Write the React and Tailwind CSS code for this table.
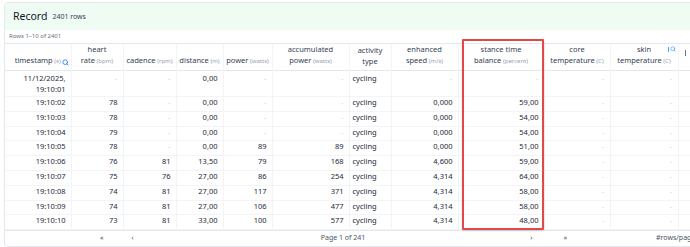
import { Search } from "lucide-react";

const columns = [
  { name: "timestamp", unit: "s", width: 66 },
  { name: "heart rate", unit: "bpm", width: 52, split: ["heart", "rate"] },
  { name: "cadence", unit: "rpm", width: 53 },
  { name: "distance", unit: "m", width: 47 },
  { name: "power", unit: "watts", width: 49 },
  { name: "accumulated power", unit: "watts", width: 77, split: ["accumulated", "power"] },
  { name: "activity type", width: 42, split: ["activity", "type"] },
  { name: "enhanced speed", unit: "m/s", width: 67, split: ["enhanced", "speed"] },
  { name: "stance time balance", unit: "percent", width: 86, split: ["stance time", "balance"] },
  { name: "core temperature", unit: "C", width: 66, split: ["core", "temperature"] },
  { name: "skin temperature", unit: "C", width: 68, split: ["skin", "temperature"] },
  { name: "", width: 60 },
];

const rows = [
  ["19:10:02", "78", "-", "0,00", "-", "-", "cycling", "0,000", "59,00"],
  ["19:10:03", "78", "-", "0,00", "-", "-", "cycling", "0,000", "54,00"],
  ["19:10:04", "79", "-", "0,00", "-", "-", "cycling", "0,000", "54,00"],
  ["19:10:05", "78", "-", "0,00", "89", "89", "cycling", "0,000", "51,00"],
  ["19:10:06", "76", "81", "13,50", "79", "168", "cycling", "4,600", "59,00"],
  ["19:10:07", "75", "76", "27,00", "86", "254", "cycling", "4,314", "64,00"],
  ["19:10:08", "74", "81", "27,00", "117", "371", "cycling", "4,314", "58,00"],
  ["19:10:09", "74", "81", "27,00", "106", "477", "cycling", "4,314", "58,00"],
  ["19:10:10", "73", "81", "33,00", "100", "577", "cycling", "4,314", "48,00"],
];

const Cell = ({ value, first }) => {
  const pad = first ? "pt-[2px]" : "";
  if (value === "-") {
    return (
      <td className={`border-r border-gray-100 pr-[5px] text-right align-top text-gray-300 ${pad}`}>
        -
      </td>
    );
  }
  if (value === "cycling") {
    return (
      <td className={`border-r border-gray-100 pl-[3px] text-left align-top text-gray-800 ${pad}`}>
        {value}
      </td>
    );
  }
  return (
    <td className={`border-r border-gray-100 pr-[5px] text-right align-top text-gray-800 ${pad}`}>
      {value}
    </td>
  );
};

const Unit = ({ unit }) =>
  unit ? <span className="text-[6px] text-gray-400"> ({unit})</span> : null;

const App = () => {
  return (
    <div
      className="relative h-[247px] w-[690px] overflow-hidden bg-white"
      style={{ fontFamily: '"Noto Sans", "Open Sans", sans-serif' }}
    >
      <div className="ml-[4px] mt-[2px] w-[740px] overflow-hidden rounded-[4px] border border-gray-200">
        <div className="flex h-[27px] items-center gap-[5px] bg-[#effcf3] pl-[8px]">
          <span className="text-[10.5px] text-gray-900">Record</span>
          <span className="pt-[1px] text-[7px] text-gray-700">2401 rows</span>
        </div>
        <div className="flex h-[14px] items-center border-b border-gray-200 pl-[4px] text-[6px] text-gray-500">
          Rows 1–10 of 2401
        </div>
        <table className="table-fixed border-collapse text-[7.5px] leading-[10.5px]">
          <colgroup>
            {columns.map((c, i) => (
              <col key={i} style={{ width: c.width }} />
            ))}
          </colgroup>
          <thead>
            <tr className="h-[26px] border-b border-gray-200">
              {columns.map((c, i) => (
                <th
                  key={i}
                  className="relative border-r border-gray-100 px-[2px] pb-[3px] text-center align-bottom font-normal leading-[11px] text-gray-700"
                >
                  {c.split ? (
                    <>
                      <div>{c.split[0]}</div>
                      <div>
                        {c.split[1]}
                        <Unit unit={c.unit} />
                      </div>
                    </>
                  ) : (
                    <div>
                      {c.name}
                      <Unit unit={c.unit} />
                    </div>
                  )}
                  {i === 0 && (
                    <Search
                      size={7}
                      strokeWidth={3}
                      className="absolute bottom-[4px] right-[2px] text-blue-500"
                    />
                  )}
                  {i === 10 && (
                    <span className="absolute right-[2px] top-[2px] flex items-center gap-[1px] text-blue-400">
                      <span className="h-[5px] w-[1px] bg-blue-400" />
                      <Search size={6} strokeWidth={3} />
                    </span>
                  )}
                  {i === 11 && (
                    <span className="absolute left-[6px] top-[6px] h-[6px] w-[1px] bg-gray-500" />
                  )}
                </th>
              ))}
            </tr>
          </thead>
          <tbody>
            <tr className="h-[26px] border-b border-gray-100">
              <td className="border-r border-gray-100 pr-[5px] pt-[2px] text-right align-top text-gray-800">
                <div>11/12/2025,</div>
                <div>19:10:01</div>
              </td>
              {["-", "-", "0,00", "-", "-", "cycling", "-", "-", "-", "-"].map((v, j) => (
                <Cell key={j} value={v} first />
              ))}
              <td />
            </tr>
            {rows.map((r, i) => (
              <tr key={i} className="h-[14.8px] border-b border-gray-100">
                {r.map((v, j) => (
                  <Cell key={j} value={v} />
                ))}
                <Cell value="-" />
                <Cell value="-" />
                <td />
              </tr>
            ))}
          </tbody>
        </table>
        <div className="flex h-[16px] items-center border-t border-gray-200 text-[7px] text-gray-600">
          <span className="ml-[95px]">«</span>
          <span className="ml-[28px]">‹</span>
          <span className="ml-[187px]">Page 1 of 241</span>
          <span className="ml-[165px]">›</span>
          <span className="ml-[31px]">»</span>
          <span className="ml-[89px]">#rows/page</span>
        </div>
      </div>
      <div className="pointer-events-none absolute left-[462px] top-[39px] h-[191px] w-[82px] rounded-[1px] border-2 border-[#e0484a] shadow-[0_1px_2px_rgba(0,0,0,0.15)]" />
    </div>
  );
};

export default App;
